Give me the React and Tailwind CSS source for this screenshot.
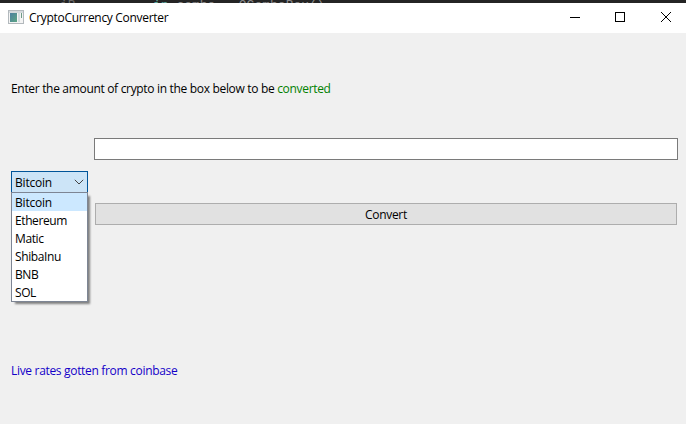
import React from "react";

const coins = ["Bitcoin", "Ethereum", "Matic", "ShibaInu", "BNB", "SOL"];

function EditorStrip() {
  return (
    <div className="flex h-[3px] shrink-0 overflow-hidden bg-[#242424] pl-[60px] font-['Liberation_Mono',monospace] text-[13px] leading-[11px] tracking-normal whitespace-pre text-[#8a8a8a]">
      <span className="w-[93px] text-[#6a6a6a]">iB</span>
      <span>
        <span className="text-[#5fa8a0]">in</span> combo = QComboBox()
      </span>
    </div>
  );
}

function TitleBar() {
  return (
    <header className="flex h-[30px] shrink-0 items-center bg-white">
      <svg className="-mt-0.5 ml-2 shrink-0" width="16" height="14" viewBox="0 0 16 14">
        <defs>
          <linearGradient id="pane" x1="0" y1="0" x2="1" y2="1">
            <stop offset="0" stopColor="#4b7fa0" />
            <stop offset="1" stopColor="#5da584" />
          </linearGradient>
        </defs>
        <rect x="0.5" y="0.5" width="15" height="13" fill="#f4f4f4" stroke="#b3b9bd" />
        <rect x="1" y="1" width="14" height="2" fill="#d3d8dc" />
        <rect x="2" y="3" width="7" height="9" fill="url(#pane)" />
        <rect x="10" y="3" width="2" height="9" fill="#d3dde0" />
        <rect x="13" y="3" width="1" height="5" fill="#6e9a86" />
      </svg>
      <h1 className="ml-[5px] grow text-[12px] leading-4 tracking-[-0.31px]">CryptoCurrency Converter</h1>
      <svg className="shrink-0" width="137" height="30" viewBox="0 0 137 30" shapeRendering="crispEdges">
        <path d="M21 14.5H31" stroke="#000" />
        <rect x="66.5" y="9.5" width="9" height="9" fill="none" stroke="#000" />
        <path d="M112 9L122 19M122 9L112 19" stroke="#000" shapeRendering="auto" />
      </svg>
    </header>
  );
}

function CoinPicker() {
  return (
    <div className="relative mt-[33px] h-[22px] w-[77px]">
      <button className="flex h-[22px] w-full items-center justify-between border border-[#005499] bg-[#cce4f7] pr-[3px] pl-[3px] tracking-[-0.2px]">
        <span className="pt-0.5">Bitcoin</span>
        <svg width="10" height="6" viewBox="0 0 10 6" fill="none" stroke="#444">
          <path d="M0.8 0.8L5 5L9.2 0.8" />
        </svg>
      </button>
      <ul className="absolute top-[21px] left-0 h-[110px] w-[77px] border border-[#7d8594] bg-white shadow-[3px_3px_2px_-1px_#808080]">
        {coins.map((coin, i) => (
          <li key={coin} className={`h-[18px] pl-[3px] leading-[19px] ${i === 0 ? "bg-[#cce8ff] tracking-[-0.2px]" : "tracking-[-0.4px]"}`}>
            {coin}
          </li>
        ))}
      </ul>
    </div>
  );
}

export default function App() {
  return (
    <div className="flex h-[424px] w-[686px] flex-col overflow-hidden bg-[#f0f0f0] font-['Open_Sans','Noto_Sans',sans-serif] text-[12px] leading-4 tracking-[-0.32px] text-black">
      <EditorStrip />
      <TitleBar />
      <main className="flex grow flex-col pr-2 pl-[11px]">
        <p className="mt-12 h-4">
          Enter the amount of crypto in the box below to be <span className="text-[#008000]">converted</span>
        </p>
        <div className="mt-[41px] flex gap-[6px]">
          <CoinPicker />
          <div className="flex grow flex-col">
            <input className="h-[22px] w-full border border-[#7a7a7a] bg-white" />
            <button className="mt-[43px] mr-px ml-px h-[22px] border border-[#adadad] bg-[#e1e1e1] pt-0.5">Convert</button>
          </div>
        </div>
        <p className="mt-[138px] h-4 text-[#1400c8]">Live rates gotten from coinbase</p>
      </main>
    </div>
  );
}
